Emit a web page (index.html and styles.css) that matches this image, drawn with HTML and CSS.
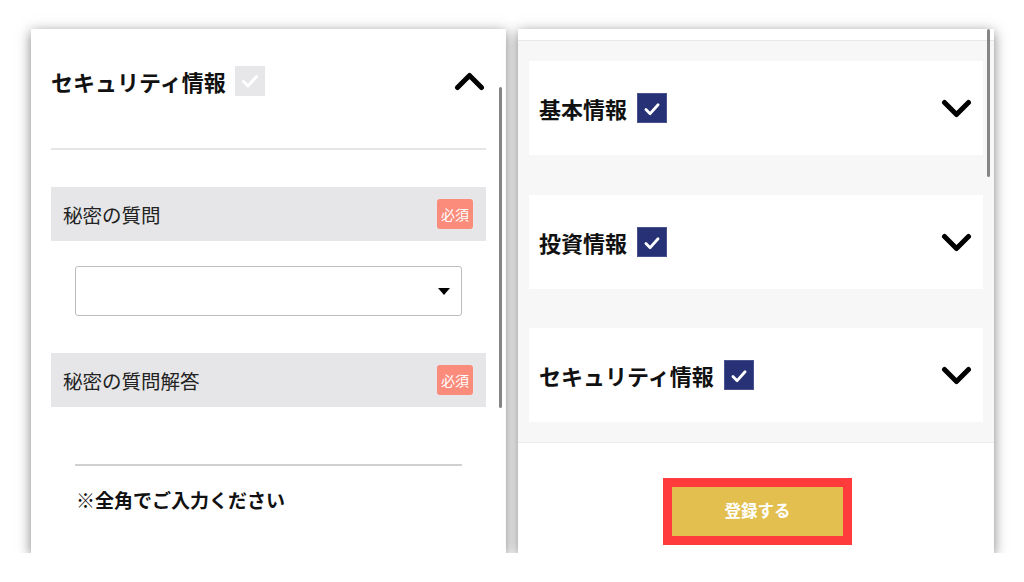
FILE: index.html
```html
<!DOCTYPE html>
<html lang="ja">
<head>
<meta charset="utf-8">
<title>登録</title>
<link rel="stylesheet" href="styles.css">
</head>
<body>
<div class="stage">
  <section class="panel panel-left">
    <div class="sec-head">
      <h2 class="sec-title">セキュリティ情報</h2>
      <span class="check check-off">
        <svg viewBox="0 0 30 30" width="30" height="30"><path d="M8.5 15.5 L13 20 L21.5 10.5" fill="none" stroke="#fff" stroke-width="3" stroke-linecap="round" stroke-linejoin="round"/></svg>
      </span>
      <span class="chev">
        <svg viewBox="0 0 31 20" width="31" height="20"><path d="M3.5 16.5 L15.5 4.5 L27.5 16.5" fill="none" stroke="#000" stroke-width="5" stroke-linecap="round" stroke-linejoin="round"/></svg>
      </span>
    </div>
    <div class="field-row">
      <span class="field-label">秘密の質問</span>
      <span class="badge">必須</span>
    </div>
    <div class="select">
      <span class="caret"></span>
    </div>
    <div class="field-row row-2">
      <span class="field-label">秘密の質問解答</span>
      <span class="badge">必須</span>
    </div>
    <div class="note">※全角でご入力ください</div>
    <div class="scroll-thumb left-thumb"></div>
  </section>

  <section class="panel panel-right">
    <div class="top-strip"></div>
    <div class="cards">
      <div class="card">
        <h2 class="sec-title">基本情報</h2>
        <span class="check check-on">
          <svg viewBox="0 0 30 30" width="30" height="30"><path d="M8.5 15.5 L13 20 L21.5 10.5" fill="none" stroke="#fff" stroke-width="3" stroke-linecap="round" stroke-linejoin="round"/></svg>
        </span>
        <span class="chev">
          <svg viewBox="0 0 31 20" width="31" height="20"><path d="M3.5 3.5 L15.5 15.5 L27.5 3.5" fill="none" stroke="#000" stroke-width="5" stroke-linecap="round" stroke-linejoin="round"/></svg>
        </span>
      </div>
      <div class="card">
        <h2 class="sec-title">投資情報</h2>
        <span class="check check-on">
          <svg viewBox="0 0 30 30" width="30" height="30"><path d="M8.5 15.5 L13 20 L21.5 10.5" fill="none" stroke="#fff" stroke-width="3" stroke-linecap="round" stroke-linejoin="round"/></svg>
        </span>
        <span class="chev">
          <svg viewBox="0 0 31 20" width="31" height="20"><path d="M3.5 3.5 L15.5 15.5 L27.5 3.5" fill="none" stroke="#000" stroke-width="5" stroke-linecap="round" stroke-linejoin="round"/></svg>
        </span>
      </div>
      <div class="card">
        <h2 class="sec-title">セキュリティ情報</h2>
        <span class="check check-on">
          <svg viewBox="0 0 30 30" width="30" height="30"><path d="M8.5 15.5 L13 20 L21.5 10.5" fill="none" stroke="#fff" stroke-width="3" stroke-linecap="round" stroke-linejoin="round"/></svg>
        </span>
        <span class="chev">
          <svg viewBox="0 0 31 20" width="31" height="20"><path d="M3.5 3.5 L15.5 15.5 L27.5 3.5" fill="none" stroke="#000" stroke-width="5" stroke-linecap="round" stroke-linejoin="round"/></svg>
        </span>
      </div>
    </div>
    <div class="submit-area">
      <div class="highlight">
        <button class="submit" type="button">登録する</button>
      </div>
    </div>
    <div class="scroll-thumb right-thumb"></div>
  </section>
</div>
</body>
</html>
```

FILE: styles.css
```css
* { box-sizing: border-box; }
html, body {
  margin: 0;
  padding: 0;
  background: #fff;
  font-family: "Noto Sans CJK JP", "Noto Sans", sans-serif;
  color: #111;
}
.stage {
  display: flex;
  gap: 12px;
  padding: 29px 0 0 31px;
}
.panel {
  position: relative;
  height: 524px;
  background: #fff;
  box-shadow: 0 3px 12px rgba(0, 0, 0, 0.5);
  overflow: hidden;
}
.panel-left {
  width: 475px;
  padding: 0 20px;
}
.sec-head {
  display: flex;
  align-items: flex-start;
  height: 121px;
  padding-top: 37px;
  border-bottom: 2px solid #e6e6e6;
}
.sec-title {
  margin: 0;
  font-size: 22px;
  font-weight: 700;
  line-height: 30px;
  color: #111;
  letter-spacing: 0;
}
.check {
  width: 30px;
  height: 30px;
  margin-left: 10px;
  display: flex;
}
.check-off { background: #e7e7e9; }
.check-on { background: #273276; border: 1px solid #4a5290; }
.chev {
  margin-left: auto;
  display: flex;
}
.panel-left .check { margin-left: 9px; }
.panel-left .chev { margin-right: 1px; margin-top: 5px; }
.field-row {
  margin-top: 37px;
  height: 54px;
  background: #e6e6e8;
  display: flex;
  align-items: center;
  justify-content: space-between;
  padding: 0 13px 0 12px;
}
.row-2 { margin-top: 37px; }
.field-label {
  font-size: 19.5px;
  color: #222;
  font-weight: 400;
}
.badge {
  width: 36px;
  height: 30px;
  border-radius: 3px;
  background: #fb8b7b;
  color: #fff;
  font-size: 14px;
  font-weight: 400;
  display: flex;
  align-items: center;
  justify-content: center;
}
.select {
  margin: 25px 24px 0;
  height: 50px;
  border: 1px solid #bdbdbd;
  border-radius: 3px;
  display: flex;
  align-items: center;
  justify-content: flex-end;
  padding-right: 11px;
}
.caret {
  width: 0;
  height: 0;
  border-left: 6px solid transparent;
  border-right: 6px solid transparent;
  border-top: 7px solid #000;
}
.note {
  margin: 57px 24px 0;
  border-top: 2px solid #d0d0d0;
  padding-top: 19px;
  padding-left: 1px;
  font-size: 19px;
  font-weight: 700;
  color: #111;
  line-height: 30px;
}
.scroll-thumb {
  position: absolute;
  width: 3px;
  background: #858585;
  border-radius: 2px;
}
.left-thumb {
  top: 58px;
  height: 321px;
  right: 4px;
}
.panel-right {
  width: 476px;
  display: flex;
  flex-direction: column;
}
.top-strip {
  height: 12px;
  border-bottom: 1px solid #e8e8e8;
}
.cards {
  background: #f7f7f7;
  padding: 20px 11px 20px;
  display: flex;
  flex-direction: column;
  gap: 39.5px;
  border-bottom: 1px solid #ececec;
}
.card {
  background: #fff;
  height: 94px;
  display: flex;
  align-items: center;
  padding: 0 11px 0 10px;
}
.card .check { margin-left: 10px; }
.card .chev { margin-top: 2px; }
.submit-area {
  flex: 1;
  display: flex;
  justify-content: center;
  padding-top: 35px;
}
.highlight {
  width: 189px;
  height: 67px;
  border: 9px solid #ff3b3b;
  margin-left: 3px;
}
.submit {
  width: 100%;
  height: 100%;
  border: 0;
  margin: 0;
  background: #e3bf4f;
  color: #fff;
  font-family: inherit;
  font-size: 16.5px;
  font-weight: 700;
  padding: 0 0 3px;
}
.right-thumb {
  top: 0;
  right: 4px;
  height: 148px;
}
```
